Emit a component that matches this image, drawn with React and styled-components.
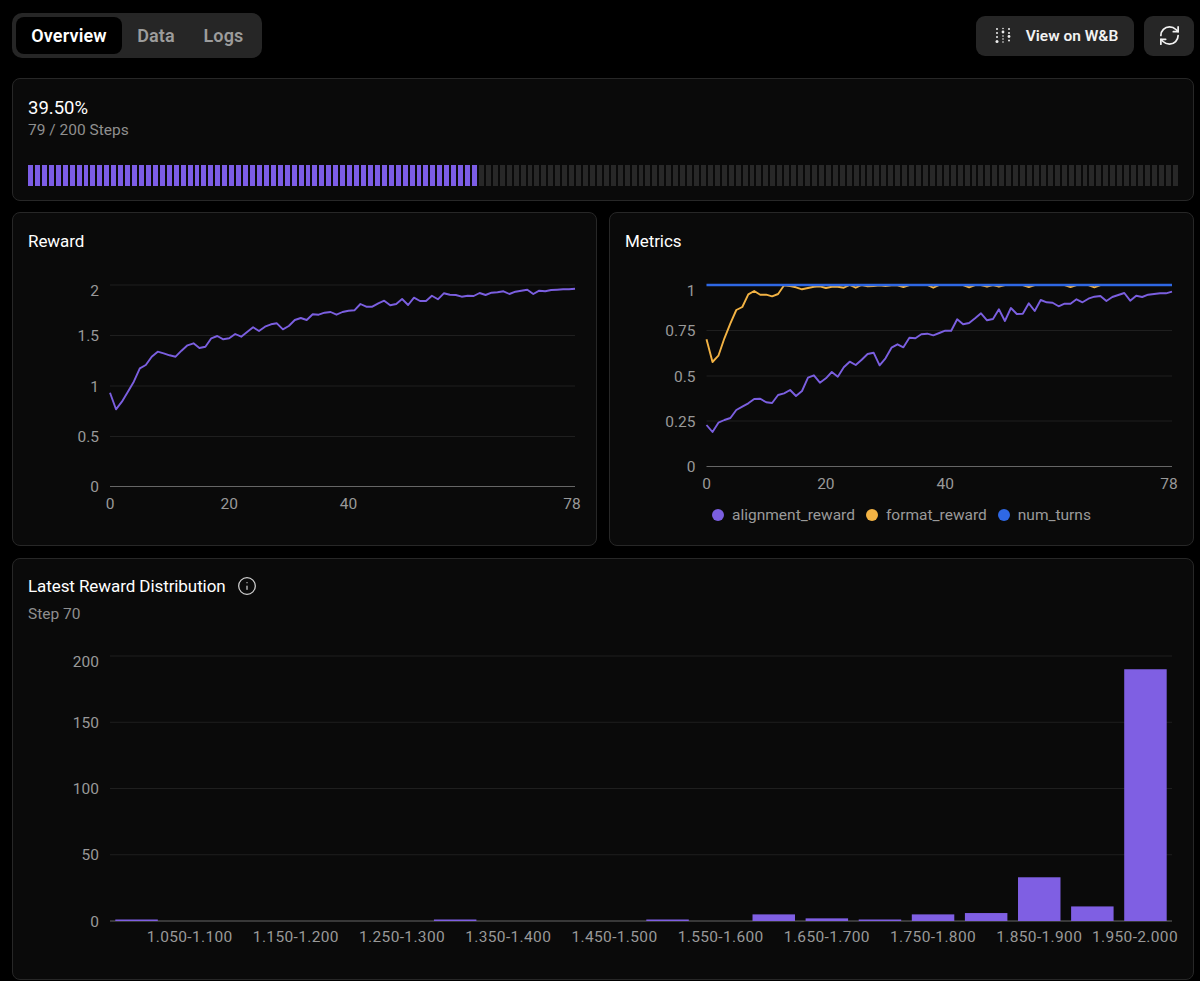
import React from "react";
import styled, { createGlobalStyle } from "styled-components";
import { RefreshCw, Info } from "lucide-react";

const PURPLE = "#7b5fe0";
const YELLOW = "#f3b344";
const BLUE = "#2f68e4";

const GlobalStyle = createGlobalStyle`
  html, body {
    margin: 0;
    background: #000;
  }
  body {
    font-family: Roboto, "Noto Sans", sans-serif;
    color: #fff;
  }
`;

const Page = styled.div`
  padding: 13px 6px 0 12px;
`;

const TopBar = styled.div`
  display: flex;
  justify-content: space-between;
  align-items: center;
  height: 45px;
  margin-bottom: 20px;
`;

const Tabs = styled.div`
  display: flex;
  padding: 4px 5px 4px 4px;
  background: #262626;
  border-radius: 10px;
`;

const Tab = styled.div`
  display: flex;
  align-items: center;
  justify-content: center;
  width: ${(p) => p.$width}px;
  height: 37px;
  border-radius: 8px;
  font-size: 18px;
  font-weight: 600;
  letter-spacing: 0.15px;
  background: ${(p) => (p.$active ? "#000" : "transparent")};
  color: ${(p) => (p.$active ? "#fff" : "#9c9c9c")};
`;

const Actions = styled.div`
  display: flex;
  gap: 10px;
`;

const Button = styled.div`
  display: flex;
  align-items: center;
  justify-content: center;
  box-sizing: border-box;
  gap: 15px;
  height: 40px;
  width: ${(p) => p.$width}px;
  padding-left: ${(p) => p.$shift || 0}px;
  background: #262626;
  border-radius: 9px;
  font-size: 15.5px;
  font-weight: 600;
  color: #f2f2f2;
`;

const Card = styled.section`
  box-sizing: border-box;
  height: ${(p) => p.$height}px;
  background: #0a0a0a;
  border: 1px solid #272727;
  border-radius: 8px;
`;

const ProgressCard = styled(Card)`
  padding: 17px 15px 15px;
  margin-bottom: 11px;
`;

const Percent = styled.div`
  font-size: 18.5px;
  line-height: 24px;
`;

const Muted = styled.div`
  font-size: 15.5px;
  line-height: 20px;
  color: #8f8f8f;
`;

const StepLabel = styled(Muted)`
  margin-top: 6px;
`;

const Segments = styled.div`
  display: flex;
  gap: 2px;
  height: 21px;
  margin-top: 25px;
`;

const Segment = styled.div`
  flex: 1;
  background: ${(p) => (p.$on ? "#7c5de6" : "#282828")};
`;

const ChartRow = styled.div`
  display: grid;
  grid-template-columns: 1fr 1fr;
  gap: 12px;
  margin-bottom: 12px;
`;

const CardHead = styled.div`
  height: ${(p) => p.$height}px;
  padding: ${(p) => p.$top || 16}px 15px 0;
  box-sizing: border-box;
`;

const Title = styled.div`
  display: flex;
  align-items: center;
  gap: 11px;
  font-size: 17px;
  line-height: 24px;
  letter-spacing: -0.08px;
  color: #fff;
`;

const Chart = styled.svg`
  display: block;
`;

const AxisText = styled.text`
  fill: #999;
  font-size: 15.5px;
`;

const BinText = styled(AxisText)`
  letter-spacing: 0.35px;
`;

const Legend = styled.div`
  display: flex;
  justify-content: center;
  gap: 11px;
  margin-top: 7px;
`;

const LegendItem = styled.div`
  display: flex;
  align-items: center;
  gap: 8px;
  height: 24px;
  font-size: 15.5px;
  color: #9a9a9a;
`;

const Dot = styled.span`
  width: 12px;
  height: 12px;
  border-radius: 50%;
  background: ${(p) => p.$color};
`;

// traced curves, as pixel rows of the reference at 3x
const rewardTrace = [
  548, 598, 575, 545, 515, 475, 465, 440, 425, 430, 436, 440, 422, 406, 400, 414, 410, 385, 378, 388,
  385, 372, 380, 366, 352, 363, 350, 343, 340, 358, 348, 330, 324, 330, 313, 314, 308, 306, 314, 306,
  302, 301, 282, 290, 290, 280, 272, 286, 282, 267, 285, 263, 273, 273, 257, 268, 250, 254, 255, 260,
  257, 258, 249, 255, 248, 247, 244, 252, 245, 242, 239, 252, 242, 244, 240, 239, 238, 238, 236,
];

const alignmentTrace = [
  645, 666, 638, 630, 624, 600, 590, 580, 567, 566, 577, 579, 555, 550, 540, 558, 543, 503, 496, 518,
  505, 486, 500, 472, 455, 465, 449, 432, 428, 466, 445, 413, 403, 412, 383, 385, 373, 371, 376, 369,
  362, 362, 328, 343, 339, 325, 310, 331, 327, 298, 333, 294, 312, 311, 280, 303, 270, 277, 278, 289,
  281, 281, 268, 277, 266, 260, 258, 273, 261, 255, 249, 272, 257, 261, 254, 252, 250, 250, 245,
];

const formatDips = { 33: 231, 38: 233, 44: 232, 47: 230, 49: 230, 54: 231, 61: 231, 65: 232 };
const formatTrace = [
  388, 456, 437, 385, 340, 300, 291, 253, 243, 254, 254, 259, 252, 226, 228, 232, 238, 234, 230, 229,
  234, 230, 230, 233, 225, 233, 225, 229, 228, 226, 228, 226, 226,
];
for (let i = formatTrace.length; i < 79; i++) formatTrace.push(formatDips[i] || 225);
formatTrace[33] = formatDips[33];

const flatTrace = new Array(79).fill(225);

const histogram = [1, 0, 0, 0, 0, 0, 1, 0, 0, 0, 1, 0, 5, 2, 1, 5, 6, 33, 11, 190];

const toPoints = (trace, x0, x1, offsetY) =>
  trace
    .map((row, i) => {
      const x = x0 + ((x1 - x0) * i) / (trace.length - 1);
      return `${x.toFixed(1)},${(row / 3 - offsetY).toFixed(1)}`;
    })
    .join(" ");

// originY is the page row of the svg top, so traced rows can be placed directly
function LineChart({ width, height, originY, x0, x1, yTicks, xLabelY, series }) {
  const dx = (x1 - x0) / 78;
  return (
    <Chart width={width} height={height} viewBox={`0 0 ${width} ${height}`}>
      {yTicks.map((t, i) => (
        <g key={t.label}>
          <line
            x1={x0}
            x2={x1}
            y1={t.y - originY}
            y2={t.y - originY}
            stroke={i === yTicks.length - 1 ? "#666" : "#1f1f1f"}
          />
          <AxisText x={x0 - 11} y={t.y - originY + (i === 0 ? 10.5 : 5.5)} textAnchor="end">
            {t.label}
          </AxisText>
        </g>
      ))}
      {[0, 20, 40].map((n) => (
        <AxisText key={n} x={x0 + n * dx} y={xLabelY - originY + 5.5} textAnchor="middle">
          {n}
        </AxisText>
      ))}
      <AxisText x={x1 - 3} y={xLabelY - originY + 5.5} textAnchor="middle">
        78
      </AxisText>
      {series.map((s) => (
        <polyline
          key={s.color}
          points={toPoints(s.trace, x0, x1, originY - 210)}
          fill="none"
          stroke={s.color}
          strokeWidth={s.weight || 1.9}
          strokeLinejoin="round"
        />
      ))}
    </Chart>
  );
}

function Histogram() {
  const originY = 636;
  const x0 = 97;
  const x1 = 1159;
  const band = (x1 - x0) / histogram.length;
  const perUnit = 1.325;
  const base = 920 - originY;
  return (
    <Chart width={1180} height={320} viewBox="0 0 1180 320">
      {[200, 150, 100, 50, 0].map((v, i) => (
        <g key={v}>
          <line
            x1={x0}
            x2={x1}
            y1={base - v * perUnit}
            y2={base - v * perUnit}
            stroke={v === 0 ? "#666" : "#1f1f1f"}
          />
          <AxisText x={x0 - 11} y={base - v * perUnit + (i === 0 ? 10.5 : 5.5)} textAnchor="end">
            {v}
          </AxisText>
        </g>
      ))}
      {histogram.map((count, i) =>
        count ? (
          <rect
            key={i}
            x={x0 + i * band + band * 0.1}
            y={base - Math.max(count * perUnit, 1.5)}
            width={band * 0.8}
            height={Math.max(count * perUnit, 1.5)}
            fill="#7f5fe3"
          />
        ) : null
      )}
      {histogram.map((_, i) => {
        if (i % 2 === 0) return null;
        const lo = (1 + i * 0.05).toFixed(3);
        const hi = (1 + (i + 1) * 0.05).toFixed(3);
        // the last label is pulled in so it stays inside the chart
        const last = i === histogram.length - 1;
        return (
          <BinText
            key={i}
            x={last ? 1165 : x0 + (i + 0.5) * band}
            y={base + 21}
            textAnchor={last ? "end" : "middle"}
          >
            {lo}-{hi}
          </BinText>
        );
      })}
    </Chart>
  );
}

function WandbMark() {
  const dots = [
    [2, 2, 1],
    [2, 6, 1],
    [2, 10, 1],
    [2, 14.5, 1.5],
    [8, 1.5, 0.8],
    [8, 5, 1.4],
    [8, 9, 0.8],
    [8, 12, 0.8],
    [8, 15, 0.8],
    [14, 2, 1],
    [14, 6, 1],
    [14, 9.5, 1.4],
    [14, 13.5, 1],
  ];
  return (
    <svg width="16" height="17" viewBox="0 0 16 17" fill="#eee">
      {dots.map(([cx, cy, r]) => (
        <circle key={`${cx}-${cy}`} cx={cx} cy={cy} r={r} />
      ))}
    </svg>
  );
}

export default function App() {
  const segments = Array.from({ length: 166 }, (_, i) => i < 65);
  return (
    <Page>
      <GlobalStyle />
      <TopBar>
        <Tabs>
          <Tab $active $width={106}>Overview</Tab>
          <Tab $width={68}>Data</Tab>
          <Tab $width={67}>Logs</Tab>
        </Tabs>
        <Actions>
          <Button $width={158} $shift={3}>
            <WandbMark />
            View on W&amp;B
          </Button>
          <Button $width={50}>
            <RefreshCw size={23} strokeWidth={1.8} />
          </Button>
        </Actions>
      </TopBar>

      <ProgressCard $height={123}>
        <Percent>39.50%</Percent>
        <Muted>79 / 200 Steps</Muted>
        <Segments>
          {segments.map((on, i) => (
            <Segment key={i} $on={on} />
          ))}
        </Segments>
      </ProgressCard>

      <ChartRow>
        <Card $height={334}>
          <CardHead $height={53}>
            <Title>Reward</Title>
          </CardHead>
          <LineChart
            width={583}
            height={279}
            originY={266}
            x0={97}
            x1={562}
            xLabelY={503}
            yTicks={[
              { label: "2", y: 285 },
              { label: "1.5", y: 335.5 },
              { label: "1", y: 386 },
              { label: "0.5", y: 436.5 },
              { label: "0", y: 486.5 },
            ]}
            series={[{ color: PURPLE, trace: rewardTrace }]}
          />
        </Card>
        <Card $height={334}>
          <CardHead $height={53}>
            <Title>Metrics</Title>
          </CardHead>
          <LineChart
            width={583}
            height={230}
            originY={266}
            x0={96.5}
            x1={562}
            xLabelY={483}
            yTicks={[
              { label: "1", y: 285 },
              { label: "0.75", y: 330.5 },
              { label: "0.5", y: 376 },
              { label: "0.25", y: 421 },
              { label: "0", y: 466.5 },
            ]}
            series={[
              { color: YELLOW, trace: formatTrace },
              { color: PURPLE, trace: alignmentTrace },
              { color: BLUE, trace: flatTrace, weight: 2.6 },
            ]}
          />
          <Legend>
            <LegendItem>
              <Dot $color={PURPLE} />
              alignment_reward
            </LegendItem>
            <LegendItem>
              <Dot $color={YELLOW} />
              format_reward
            </LegendItem>
            <LegendItem>
              <Dot $color={BLUE} />
              num_turns
            </LegendItem>
          </Legend>
        </Card>
      </ChartRow>

      <Card $height={422}>
        <CardHead $height={78} $top={15}>
          <Title>
            Latest Reward Distribution
            <Info size={20} strokeWidth={1.5} color="#cfcfcf" />
          </Title>
          <StepLabel>Step 70</StepLabel>
        </CardHead>
        <Histogram />
      </Card>
    </Page>
  );
}
